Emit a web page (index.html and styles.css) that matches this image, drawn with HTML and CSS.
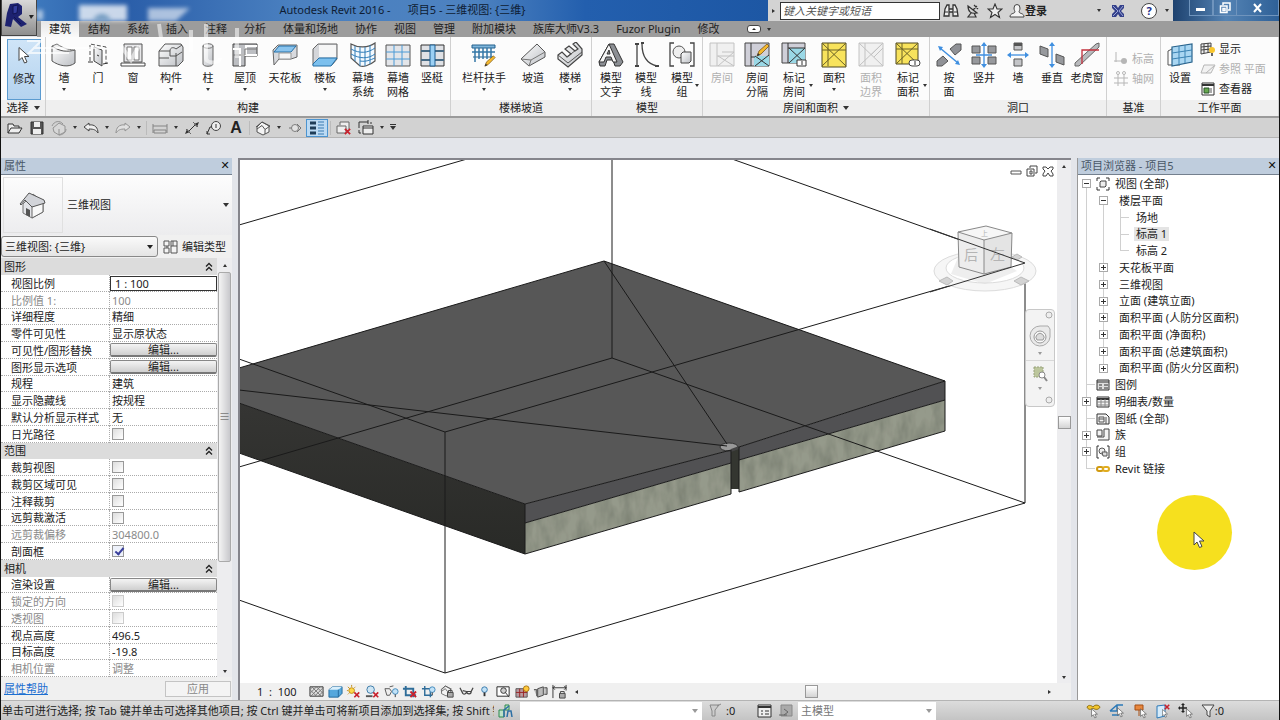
FILE: index.html
```html
<!DOCTYPE html>
<html lang="zh-CN">
<head>
  <meta charset="UTF-8">
  <meta name="viewport" content="width=device-width, initial-scale=1.0">
  <title>Autodesk Revit 2016 - 项目5</title>
  <link rel="stylesheet" href="styles.css">
</head>
<body>

  <svg class="defs" aria-hidden="true">
    <defs>
      <linearGradient id="metal" x1="0" y1="0" x2="1" y2="1"><stop offset="0" stop-color="#fff"/><stop offset="1" stop-color="#bcbfc4"/></linearGradient>
      <symbol id="pointer" viewBox="0 0 12 18"><path d="M1 1v13l3-3 2.500 5.500 2.500-1-2.500-5.500h4.500z" fill="#fff" stroke="#444" stroke-width="1"/></symbol>
      <symbol id="pencil" viewBox="0 0 14 14"><path d="M1 13l2-5 8-7 2 2-8 8z" fill="#f5b92e" stroke="#7a5618" stroke-width=".8"/><path d="M1 13l1-3 2 2z" fill="#333"/></symbol>
      <symbol id="redx" viewBox="0 0 8 8"><path d="M1 1l6 6M7 1l-6 6" stroke="#c8202c" stroke-width="2"/></symbol>
      <symbol id="house" viewBox="0 0 16 16"><path d="M2 7l5-5 7 4v6l-6 3-6-3z" fill="#f4f4f4" stroke="#555"/><path d="M1 7l6-5 8 4-5 3.500L7 5.500 2 9M10 9.500V14" fill="none" stroke="#555"/></symbol>
      <symbol id="chevrons" viewBox="0 0 8 8"><path d="M1 4l3-3 3 3M1 8l3-3 3 3" fill="none" stroke="#222" stroke-width="1.300"/></symbol>
    </defs>
  </svg>

  <header class="top">
    <button class="app-button" aria-label="应用程序菜单">
      <svg width="30" height="30" viewBox="0 0 30 30"><path d="M6 1l8-1 4 3v8l-4 3 9 7-6 3-8-8-2 8-6-1 2-13z" fill="#1d2270"/><path d="M9 3l5-1-1 8-4 1zM10 14l7 7" fill="#333d9c" stroke="#121552"/><path d="M25 12h5l-3 4z" fill="#222"/></svg>
    </button>
    <div class="top-rows">
      <div class="titlebar">
        <div class="title">Autodesk Revit 2016 -&nbsp; &nbsp; &nbsp; 项目5 - 三维视图: {三维}</div>
        <div class="infocenter">
          <span class="tri-right"></span>
          <input class="search" type="text" aria-label="搜索" placeholder="键入关键字或短语">
          <button aria-label="查找"><svg width="16" height="16" viewBox="0 0 16 16"><path d="M1 13l1-7 2-4h2v11zM15 13l-1-7-2-4h-2v11zM6 6h4v3H6z" fill="#eee" stroke="#333" stroke-width="1.300"/><path d="M2 9h3M11 9h3" stroke="#333"/></svg></button>
          <button aria-label="通讯中心"><svg width="16" height="16" viewBox="0 0 16 16"><path d="M3 3c0 6 3 8 9 7zM8 7l4-4M6 10l-3 4h8l-2-4M9 2l4 4" fill="none" stroke="#333" stroke-width="1.200"/></svg></button>
          <button aria-label="收藏夹"><svg width="16" height="16" viewBox="0 0 16 16"><path d="M8 1l2 5h5l-4 3.500 1.500 5L8 11.500l-4.500 3 1.500-5L1 6h5z" fill="#eee" stroke="#333" stroke-width="1.100"/></svg></button>
          <button class="signin"><svg width="16" height="16" viewBox="0 0 16 16"><path d="M5 5a3 3.500 0 0 1 6 0c0 2-1 3-1 4 1 2 5 1 5 5H1c0-4 4-3 5-5 0-1-1-2-1-4z" fill="#f4f4f4" stroke="#444"/></svg><b>登录</b></button>
          <span class="tri signin-tri"></span>
          <button aria-label="Exchange Apps"><svg width="16" height="16" viewBox="0 0 16 16"><path d="M2 2h4l2 3 2-3h4v3l-3 3 3 3v3h-4l-2-3-2 3H2v-3l3-3-3-3z" fill="#34408a"/><path d="M3 3l5 5-5 5M13 3L9 8l4 5" stroke="#9aa6d8" fill="none"/></svg></button>
          <button class="help" aria-label="帮助">?</button>
          <span class="tri"></span>
        </div>
        <div class="window-buttons">
          <button aria-label="最小化"><svg width="12" height="12"><path d="M1 6h9v3H1z" fill="#fff"/></svg></button>
          <button aria-label="还原"><svg width="12" height="12"><path d="M4 3V1h7v7H9M1.500 4h6.500v6.500H1.500zM4 6.500h2v2H4z" fill="none" stroke="#fff" stroke-width="1.500"/></svg></button>
          <button aria-label="关闭" class="win-close"><svg width="12" height="12"><path d="M2 2l7 8M9 2l-7 8" stroke="#fff" stroke-width="2"/></svg></button>
        </div>
      </div>
      <nav class="tabs">
        <button class="tab active">建筑</button>
        <button class="tab">结构</button>
        <button class="tab">系统</button>
        <button class="tab">插入</button>
        <button class="tab">注释</button>
        <button class="tab">分析</button>
        <button class="tab">体量和场地</button>
        <button class="tab">协作</button>
        <button class="tab">视图</button>
        <button class="tab">管理</button>
        <button class="tab">附加模块</button>
        <button class="tab">族库大师V3.3</button>
        <button class="tab">Fuzor Plugin</button>
        <button class="tab">修改</button>
        <button class="ribbon-toggle" aria-label="最小化功能区"><span></span></button>
        <span class="tri"></span>
      </nav>
    </div>
    <svg class="watermark" width="250" height="70" viewBox="0 0 250 70" aria-hidden="true">
      <g class="blur" fill="#fff"><path d="M78 5h48v16H78z" opacity=".75"/><path d="M147 8h42l-14 13h-28z" opacity=".6"/><path d="M36 10h6v10h-6z" opacity=".6"/></g>
      <path d="M92 20c4-8 14-8 18 0z" fill="#4a7fae" opacity=".7" class="blur"/>
      <g fill="none" stroke="#fff" stroke-width="4" opacity=".55"><path d="M158 24l2 14M190 30v22M205 24v34c0 6 14 6 14 0M236 28v30M120 46l10 14 8-14"/></g>
      <g fill="none" stroke="#fff" stroke-width="2" opacity=".7"><path d="M26 41h14l-12 12h40M32 48h68"/></g>
    </svg>
  </header>

  <section class="ribbon">
    <div class="panel select-panel">
      <div class="tools">
        <button class="tool w34 current"><svg width="26" height="26" viewBox="0 0 26 26"><use href="#pointer" x="7" y="3" width="12" height="19"/></svg>修改</button>
      </div>
      <div class="panel-title">选择 <span class="tri big-tri"></span></div>
    </div>

    <div class="panel">
      <div class="tools">
        <button class="tool w34"><svg width="26" height="26" viewBox="0 0 26 26"><path d="M1 4c8 6 16 6 23 4v13c-6 5-16 3-23-2z" fill="url(#metal)" stroke="#555"/><path d="M1 4l5-2c7 5 14 6 18 6" fill="#eee" stroke="#777"/></svg>墙<span class="tri"></span></button>
        <button class="tool w34"><svg width="26" height="26" viewBox="0 0 26 26"><path d="M5 19V2l16 3v17" fill="none" stroke="#555" stroke-dasharray="4 2"/><path d="M9 5l8 3v16l-8-5z" fill="url(#metal)" stroke="#444"/><path d="M12 13l2 1M3 20h5M18 22l5-1" stroke="#333"/></svg>门</button>
        <button class="tool w36"><svg width="26" height="26" viewBox="0 0 26 26"><path d="M4 2h18v18H4z" fill="#e8e8ea" stroke="#555"/><path d="M7 5h5v13H7zM14 5h5v13h-5z" fill="#fff" stroke="#777"/><path d="M1 21h24v3H1z" fill="#fff" stroke="#444"/></svg>窗</button>
        <button class="tool w40"><svg width="26" height="26" viewBox="0 0 26 26"><path d="M1 9l6-7h16l2 3v14l-5 5H1z" fill="url(#metal)" stroke="#555"/><path d="M1 9h11c0-4 4-4 6-2l6-4M18 11v13M12 9v5h6l6-4M1 16h10" fill="none" stroke="#555"/></svg>构件<span class="tri"></span></button>
        <button class="tool w34"><svg width="26" height="26" viewBox="0 0 26 26"><path d="M8 4c0-3 10-3 10 0v18c0 3-10 3-10 0z" fill="url(#metal)" stroke="#666"/><path d="M8 4c0 3 10 3 10 0" fill="none" stroke="#777"/></svg>柱<span class="tri"></span></button>
        <button class="tool w40"><svg width="26" height="26" viewBox="0 0 26 26"><path d="M1 2h24v12H13v10H1z" fill="#bcbec2" stroke="#444"/><path d="M1 7h7v6h17M8 13v11M25 4h-11v10" fill="none" stroke="#fff" stroke-width="2"/><path d="M1 13h12v-6h12" fill="none" stroke="#777"/></svg>屋顶<span class="tri"></span></button>
        <button class="tool w40"><svg width="26" height="26" viewBox="0 0 26 26"><path d="M1 8l5-5h19v12l-6 2H7l-5 6z" fill="#d8dade" stroke="#666"/><path d="M2 10l5-6h17l-5 6z" fill="#8ac4ee" stroke="#2470a8"/><path d="M7 11h12v6H7z" fill="#f6f6f6" stroke="#999"/></svg>天花板</button>
        <button class="tool w40"><svg width="26" height="26" viewBox="0 0 26 26"><path d="M1 7l5-5h19v15l-5 6H1z" fill="#d4d6da" stroke="#666"/><path d="M7 3h17v12H7z" fill="#f6f6f6"/><path d="M1 22l6-6h18l-6 8H1z" fill="#7cc0ee" stroke="#2470a8"/></svg>楼板<span class="tri"></span></button>
        <button class="tool w36"><svg width="26" height="26" viewBox="0 0 26 26"><path d="M1 2c7 4 17 4 24-1v18c-6 5-12 6-15 5L1 16z" fill="#f4faff" stroke="#555" stroke-width="1.200"/><path d="M5 4v15M10 5v19M15 5v19M20 3v19M1 7c9 5 17 4 24-1M1 12c9 5 17 5 24 0M10 19c6 1 10-1 15-3" fill="none" stroke="#2f7cb8"/></svg>幕墙<br>系统</button>
        <button class="tool w34"><svg width="26" height="26" viewBox="0 0 26 26"><path d="M1 3h24v21H1z" fill="#e3e5e9" stroke="#555"/><path d="M1 10h24M1 17h24M9 3v21M17 3v21" stroke="#4a9ad6"/></svg>幕墙<br>网格</button>
        <button class="tool w34"><svg width="26" height="26" viewBox="0 0 26 26"><path d="M2 3h23v21H2z" fill="#dfe1e5" stroke="#333"/><path d="M2 9h23M2 18h23" stroke="#222" stroke-width="2"/><path d="M2 9h9M16 9h9M2 18h9M16 18h9" stroke="#6cb4e8"/><path d="M11 3h5v21h-5z" fill="#9bd0f4" stroke="#1d5f92"/></svg>竖梃</button>
      </div>
      <div class="panel-title">构建</div>
    </div>

    <div class="panel">
      <div class="tools">
        <button class="tool w64"><svg width="26" height="26" viewBox="0 0 26 26"><path d="M1 3h23v3H1zM2 15h21" fill="#7fb6dc" stroke="#24608c"/><path d="M4 6v14M8 6v11M12 6v11M16 6v11M20 6v10M1 10h23" stroke="#3577a6" stroke-width="1.500"/><use href="#pencil" x="13" y="13" width="12" height="12"/></svg>栏杆扶手<span class="tri"></span></button>
        <button class="tool w34"><svg width="26" height="26" viewBox="0 0 26 26"><path d="M1 17L17 2l8 8v5L9 24z" fill="url(#metal)" stroke="#555"/><path d="M9 24l2-6 14-8M1 17l10 1" fill="none" stroke="#777"/></svg>坡道</button>
        <button class="tool w40"><svg width="26" height="26" viewBox="0 0 26 26"><path d="M1 13l4-3 5 5 4-3-6-5 4-3 6 5 3-2-5-5 3-2 6 7v6L11 25 1 17z" fill="url(#metal)" stroke="#444" stroke-width="1.200"/><path d="M1 13l10 8 14-11M10 15l9-7" fill="none" stroke="#555"/></svg>楼梯<span class="tri"></span></button>
      </div>
      <div class="panel-title">楼梯坡道</div>
    </div>

    <div class="panel model-panel">
      <div class="tools">
        <button class="tool w34"><svg width="26" height="26" viewBox="0 0 26 26"><path d="M1 20L11 2h5l9 18-3 4h-5l-2-6H9l-2 6H2z" fill="#8c8f94" stroke="#333"/><path d="M1 20L11 2l8 18h-4l-2-5H8l-2 5zM9 12h3l-1-4z" fill="#f6f6f6" stroke="#333"/></svg>模型<br>文字</button>
        <button class="tool w36"><svg width="26" height="26" viewBox="0 0 26 26"><path d="M4 2v22M9 2c0 14 6 20 15 22" fill="none" stroke="#444" stroke-width="1.300"/><path d="M2 2h4M2 24h4M8 1h3M22 24h4" stroke="#444" stroke-width="2"/></svg>模型<br>线</button>
        <button class="tool w36"><svg width="26" height="26" viewBox="0 0 26 26"><path d="M5 1H1v23h4M21 1h4v23h-4" fill="none" stroke="#444" stroke-width="1.300"/><circle cx="10" cy="10" r="6" fill="#eee" stroke="#555"/><path d="M12 12l2-2h8v9l-2 2h-8z" fill="url(#metal)" stroke="#444"/></svg>模型<br>组<span class="tri side"></span></button>
      </div>
      <div class="panel-title">模型</div>
    </div>

    <div class="panel">
      <div class="tools">
        <button class="tool w36" disabled><svg width="26" height="26" viewBox="0 0 26 26"><path d="M1 1h24v23H1z" fill="#ececec" stroke="#aaa"/><path d="M8 1v13h5M8 14v10M25 10H13M13 14h12M9 14l16 10M25 10L9 24" fill="none" stroke="#aaa"/></svg>房间</button>
        <button class="tool w34"><svg width="26" height="26" viewBox="0 0 26 26"><path d="M1 1h24v23H1z" fill="#cfcfd8" stroke="#444"/><path d="M10 14h15v10H10z" fill="#9ad8e6"/><path d="M7 1v14h4M7 15v9M11 14l14 10M25 13L11 24" fill="none" stroke="#333"/><use href="#pencil" x="12" y="1" width="14" height="14"/></svg>房间<br>分隔</button>
        <button class="tool w40"><svg width="26" height="26" viewBox="0 0 26 26"><path d="M1 1h23v20H1z" fill="#cfcfd8" stroke="#444"/><path d="M8 6h16v15H8z" fill="#9ad8e6"/><path d="M7 1v20M7 6h17M8 6l16 15M24 6L8 21" fill="none" stroke="#333"/><path d="M16 18h9v6h-9z" fill="#fff" stroke="#333"/><path d="M21 19v4" stroke="#333"/></svg>标记<br>房间<span class="tri side"></span></button>
        <button class="tool w40"><svg width="26" height="26" viewBox="0 0 26 26"><path d="M1 1h24v24H1z" fill="#f8e35c" stroke="#4d4620"/><path d="M1 8h24M7 1v23M1 1l24 23M25 1L1 24" stroke="#6b6227"/></svg>面积<span class="tri"></span></button>
        <button class="tool w34" disabled><svg width="26" height="26" viewBox="0 0 26 26"><path d="M1 1h24v23H1z" fill="#ececec" stroke="#aaa"/><path d="M1 1l24 23M25 1L1 24M7 1v23M13 13L24 2M16 15l9-9" stroke="#aaa"/></svg>面积<br>边界</button>
        <button class="tool w40"><svg width="26" height="26" viewBox="0 0 26 26"><path d="M1 1h22v21H1z" fill="#f8e35c" stroke="#4d4620"/><path d="M1 7h22M7 1v21M1 1l22 21M23 1L1 22" stroke="#6b6227"/><rect x="14" y="18" width="11" height="6" rx="3" fill="#fff" stroke="#444"/><path d="M20 19v4" stroke="#333"/></svg>标记<br>面积<span class="tri side"></span></button>
      </div>
      <div class="panel-title">房间和面积 <span class="tri big-tri"></span></div>
    </div>

    <div class="panel">
      <div class="tools">
        <button class="tool w36"><svg width="26" height="26" viewBox="0 0 26 26"><path d="M14 7l6-5h5v6l-6 5zM1 19l6-5 5 5-6 5H1z" fill="#8f9196" stroke="#555"/><path d="M4 6l18 15" stroke="#3f8fe0" stroke-width="1.500"/><path d="M2 4l5 1-3 4zM24 23l-5-1 3-4z" fill="#3f8fe0"/></svg>按<br>面</button>
        <button class="tool w34"><svg width="26" height="26" viewBox="0 0 26 26"><path d="M1 4h8v7H1zM17 4h8v7h-8zM1 15h8v7H1zM17 15h8v7h-8z" fill="#97999d" stroke="#555"/><path d="M13 2v22M5 13h16" stroke="#3f8fe0" stroke-width="1.300"/><path d="M13 0l3 4h-6zM13 26l3-4h-6z" fill="#3f8fe0"/></svg>竖井</button>
        <button class="tool w34"><svg width="26" height="26" viewBox="0 0 26 26"><path d="M9 1h8v7H9zM9 17h8v7H9z" fill="#c4c5c8" stroke="#555"/><path d="M9 1h8v3H9z" fill="#555"/><path d="M4 13h18" stroke="#3f8fe0" stroke-width="1.300"/><path d="M2 13l4-3v6zM24 13l-4-3v6z" fill="#3f8fe0"/></svg>墙</button>
        <button class="tool w34"><svg width="26" height="26" viewBox="0 0 26 26"><path d="M1 4l8 3v8l-8-3zM17 12l8 3v8l-8-3z" fill="#97999d" stroke="#555"/><path d="M13 3v21" stroke="#3f8fe0" stroke-width="1.300"/><path d="M13 0l3 4h-6zM13 26l3-4h-6z" fill="#3f8fe0"/></svg>垂直</button>
        <button class="tool w36"><svg width="26" height="26" viewBox="0 0 26 26"><path d="M1 21L22 2l3-1v4L5 24H1z" fill="#b9babd" stroke="#666"/><path d="M8 22V8h17" fill="none" stroke="#c2303c" stroke-width="1.300"/></svg>老虎窗</button>
      </div>
      <div class="panel-title">洞口</div>
    </div>

    <div class="panel datum-panel">
      <div class="tools column">
        <button class="small-tool" disabled><svg width="16" height="16" viewBox="0 0 16 16"><path d="M3 1v10M1 10h9" stroke="#999"/><circle cx="11" cy="10" r="3" fill="#999"/></svg>标高</button>
        <button class="small-tool" disabled><svg width="16" height="16" viewBox="0 0 16 16"><path d="M5 3v12M11 3v12M1 7h14M1 12h14" stroke="#999"/><circle cx="5" cy="2" r="1.500" fill="none" stroke="#999"/><circle cx="11" cy="2" r="1.500" fill="none" stroke="#999"/></svg>轴网</button>
      </div>
      <div class="panel-title">基准</div>
    </div>

    <div class="panel last-panel">
      <div class="tools">
        <button class="tool w36"><svg width="26" height="26" viewBox="0 0 26 26"><path d="M1 9v14h12M1 9l4-2" fill="none" stroke="#555"/><path d="M5 5l20-3v18L5 24z" fill="#a9d6f2" stroke="#29638c" stroke-width="1.200"/><path d="M12 4v19M18 3v18M5 11l20-3M5 17l20-3" stroke="#3b83b4"/></svg>设置</button>
        <div class="column work-column">
          <button class="small-tool"><svg width="16" height="16" viewBox="0 0 16 16"><path d="M1 3l10-1v9L1 13zM4 3v9M8 2v10M1 6l10-1M1 9l10-1" fill="#eee" stroke="#444"/><circle cx="12" cy="9" r="3" fill="#f9c62c"/><path d="M12 12v3" stroke="#666" stroke-width="2"/></svg>显示</button>
          <button class="small-tool" disabled><svg width="16" height="16" viewBox="0 0 16 16"><path d="M4 4h11l-4 8H1zM6 12l8-7" fill="#eee" stroke="#999"/></svg>参照 平面</button>
          <button class="small-tool"><svg width="16" height="16" viewBox="0 0 16 16"><path d="M2 2h12v12H2z" fill="#fff" stroke="#333"/><path d="M2 4h12" stroke="#333" stroke-width="2"/><path d="M4 7h5v5H4z" fill="#66a84e" stroke="#28502b"/><path d="M11 7v5" stroke="#555"/></svg>查看器</button>
        </div>
      </div>
      <div class="panel-title">工作平面</div>
    </div>
  </section>

  <div class="qat">
    <button aria-label="打开"><svg width="16" height="16" viewBox="0 0 16 16"><path d="M1 13V4h5l1 2h5v2M1 13l3-5h11l-3 5z" fill="#eee" stroke="#333"/></svg></button>
    <button aria-label="保存"><svg width="16" height="16" viewBox="0 0 16 16"><path d="M2 2h12v12H2z" fill="#555" stroke="#333"/><path d="M5 2h6v5H5zM4 9h8v5H4z" fill="#eee"/></svg></button>
    <button aria-label="同步"><svg width="16" height="16" viewBox="0 0 16 16" opacity=".5"><path d="M2 8l6-5 6 3v6l-6 3-5-3z" fill="#ddd" stroke="#555"/><path d="M1 6c2-5 8-6 11-2M15 9c0 4-4 6-7 6M8 9v6" fill="none" stroke="#555"/></svg></button>
    <span class="tri"></span>
    <button aria-label="放弃"><svg width="16" height="16" viewBox="0 0 16 16"><path d="M1 7l5-4v2c6-1 9 3 9 8-2-3-4-4-9-4v2z" fill="#eee" stroke="#444"/></svg></button>
    <span class="tri"></span>
    <button aria-label="重做"><svg width="16" height="16" viewBox="0 0 16 16" opacity=".5"><path d="M15 7l-5-4v2C4 4 1 8 1 13c2-3 4-4 9-4v2z" fill="#eee" stroke="#555"/></svg></button>
    <span class="tri"></span>
    <i class="sep"></i>
    <button aria-label="测量"><svg width="16" height="16" viewBox="0 0 16 16" opacity=".55"><path d="M1 4v9M15 4v9M1 6h14M2 10h12v3H2z" fill="none" stroke="#444"/></svg></button>
    <span class="tri"></span>
    <button aria-label="对齐尺寸标注"><svg width="16" height="16" viewBox="0 0 16 16"><path d="M4 12l8-8" stroke="#333"/><path d="M1 14l2-5 3 3zM15 2l-5 2 3 3z" fill="#333"/><path d="M2 9l5 5M9 2l5 5" stroke="#666"/></svg></button>
    <button aria-label="按类别标记"><svg width="16" height="16" viewBox="0 0 16 16"><circle cx="10" cy="6" r="4.500" fill="#eee" stroke="#444"/><path d="M10 4v4M6 7H4l-3 7M1 11v3h3" fill="none" stroke="#333"/></svg></button>
    <button class="letter" aria-label="文字">A</button>
    <i class="sep"></i>
    <button aria-label="默认三维视图"><svg width="16" height="16"><use href="#house"/></svg></button>
    <span class="tri"></span>
    <button aria-label="剖面"><svg width="16" height="16" viewBox="0 0 16 16" opacity=".6"><path d="M2 8h4M10 4l4 4-4 4" fill="none" stroke="#333"/><circle cx="8" cy="8" r="3.500" fill="#eee" stroke="#444"/></svg></button>
    <button class="on" aria-label="细线"><svg width="16" height="16" viewBox="0 0 16 16"><path d="M1 3h6M1 8h6M1 13h6" stroke="#1f3d58" stroke-width="3"/><path d="M9 2h6M9 5h6M9 8h6M9 11h6M9 14h6" stroke="#3a7ab0"/></svg></button>
    <i class="sep"></i>
    <button aria-label="关闭隐藏窗口"><svg width="16" height="16" viewBox="0 0 16 16"><path d="M4 5V2h9v7M1 6h9v7H1z" fill="#eee" stroke="#666"/><use href="#redx" x="8" y="8" width="7" height="7"/></svg></button>
    <button aria-label="切换窗口"><svg width="16" height="16" viewBox="0 0 16 16"><path d="M5 6h10v8H5zM5 8h10" fill="#eee" stroke="#333"/><path d="M1 8V2h9M10 0v4M13 4V2M1 10v3h2" fill="none" stroke="#333"/></svg></button>
    <span class="tri"></span>
    <button class="customize" aria-label="自定义快速访问工具栏"><span class="tri big-tri"></span></button>
  </div>

  <main class="workspace">
    <aside class="palette">
      <div class="palette-head"><span>属性</span><button aria-label="关闭属性">✕</button></div>
      <button class="type-selector">
        <span class="type-thumb"><svg width="32" height="32" viewBox="0 0 32 32"><path d="M6 15v9l9 5 11-6V13L16 5z" fill="#e3e4e8" stroke="#777"/><path d="M15 17v12l11-6V13z" fill="#f8f8f8" stroke="#666"/><path d="M3 15L12 4l15 7 1 3-13 4-7-7-4 5z" fill="#d2d4d9" stroke="#555"/><path d="M9 19l4 2v7l-4-2z" fill="#555"/></svg></span>
        <span class="type-name">三维视图</span>
        <span class="tri big-tri"></span>
      </button>
      <div class="instance-row">
        <span class="select-wrap instance-select"><select aria-label="实例"><option>三维视图: {三维}</option></select></span>
        <button class="edit-type"><svg width="16" height="16" viewBox="0 0 16 16"><path d="M1 2h5v5H1zM1 9h5v5H1zM8 2h6v12H8zM8 7h6M4 7v2M10 2v5" fill="#f4f4f4" stroke="#555"/></svg>编辑类型</button>
      </div>
      <div class="props-body">
        <table class="props">
          <tbody>
            <tr class="group"><th colspan="2">图形<svg class="fold" width="8" height="9"><use href="#chevrons"/></svg></th></tr>
            <tr><th><label for="scale">视图比例</label></th><td><input class="boxed" id="scale" type="text" value="1 : 100"></td></tr>
            <tr class="off"><th>比例值 1:</th><td>100</td></tr>
            <tr><th>详细程度</th><td>精细</td></tr>
            <tr><th>零件可见性</th><td>显示原状态</td></tr>
            <tr><th>可见性/图形替换</th><td><button class="edit">编辑...</button></td></tr>
            <tr><th>图形显示选项</th><td><button class="edit">编辑...</button></td></tr>
            <tr><th>规程</th><td>建筑</td></tr>
            <tr><th>显示隐藏线</th><td>按规程</td></tr>
            <tr><th>默认分析显示样式</th><td>无</td></tr>
            <tr><th><label for="sun">日光路径</label></th><td><input id="sun" type="checkbox"></td></tr>
            <tr class="group"><th colspan="2">范围<svg class="fold" width="8" height="9"><use href="#chevrons"/></svg></th></tr>
            <tr><th><label for="crop">裁剪视图</label></th><td><input id="crop" type="checkbox"></td></tr>
            <tr><th><label for="crop-visible">裁剪区域可见</label></th><td><input id="crop-visible" type="checkbox"></td></tr>
            <tr><th><label for="anno">注释裁剪</label></th><td><input id="anno" type="checkbox"></td></tr>
            <tr><th><label for="far">远剪裁激活</label></th><td><input id="far" type="checkbox"></td></tr>
            <tr class="off"><th>远剪裁偏移</th><td>304800.0</td></tr>
            <tr><th><label for="section">剖面框</label></th><td><input id="section" type="checkbox" checked></td></tr>
            <tr class="group"><th colspan="2">相机<svg class="fold" width="8" height="9"><use href="#chevrons"/></svg></th></tr>
            <tr><th>渲染设置</th><td><button class="edit">编辑...</button></td></tr>
            <tr class="off"><th><label for="locked">锁定的方向</label></th><td><input id="locked" type="checkbox" disabled></td></tr>
            <tr class="off"><th><label for="persp">透视图</label></th><td><input id="persp" type="checkbox" disabled></td></tr>
            <tr><th><label for="eye">视点高度</label></th><td><input id="eye" type="text" value="496.5"></td></tr>
            <tr><th><label for="target">目标高度</label></th><td><input id="target" type="text" value="-19.8"></td></tr>
            <tr class="off"><th>相机位置</th><td>调整</td></tr>
          </tbody>
        </table>
        <div class="scroll props-scroll"><span class="tri-up"></span><div class="thumb">≡</div><span class="tri"></span></div>
      </div>
      <div class="palette-foot"><a href="#">属性帮助</a><button disabled>应用</button></div>
    </aside>

    <section class="view">
      <div class="view-main">
        <div class="canvas">
          <svg class="scene" viewBox="240 160 817 523" preserveAspectRatio="xMinYMin slice" role="img" aria-label="三维视图">
            <defs>
              <linearGradient id="side" x1="0" y1="0" x2="0" y2="1"><stop offset="0" stop-color="#353533"/><stop offset="1" stop-color="#292a27"/></linearGradient>
              <filter id="grain" x="0" y="0" width="1" height="1">
                <feTurbulence type="fractalNoise" baseFrequency=".09 .04" numOctaves="3" seed="4"/>
                <feColorMatrix values="0 0 0 0 .15  0 0 0 0 .17  0 0 0 0 .13  1.200 0 0 0 -.4"/>
                <feComposite in2="SourceGraphic" operator="in"/>
                <feMerge><feMergeNode in="SourceGraphic"/><feMergeNode/></feMerge>
                <feComposite in2="SourceGraphic" operator="in"/>
              </filter>
            </defs>
            <path d="M239 368L604 261 945 381 739 447 731 450 525 504 239 403z" fill="#575757"/>
            <path d="M239 403L525 504V554L239 453z" fill="url(#side)"/>
            <path d="M525 504L731 450V463L525 523zM739 447L945 381V400L739 460z" fill="#515153"/>
            <path d="M525 523L731 463V494L525 554zM739 460L945 400V431L739 492z" fill="#959a8b" filter="url(#grain)"/>
            <path d="M731 446h8v43h-8z" fill="#343630"/>
            <ellipse cx="729" cy="447" rx="9" ry="4" fill="#999" stroke="#333"/>
            <path d="M731 449l8-3v3l-8 3z" fill="#444"/>
            <g class="edges">
              <path d="M239 368L604 261 945 381V431L739 492V447L945 381M239 403L525 504V554L239 453M525 504L731 450V494L525 554M525 523L731 463M739 460L945 400"/>
              <path d="M604 261L727 444M239 390L727 446"/>
            </g>
            <g class="wire">
              <path d="M239 225L467 159M612 159V358L239 467M732 159L1025 263V503L612 358M1025 264L445 432L239 359M445 432V673L239 600M445 673L1025 503"/>
            </g>
            <g class="cube">
              <ellipse cx="985" cy="271" rx="51" ry="20" fill="#f6f6f6" stroke="#dcdcdc"/>
              <ellipse cx="985" cy="268" rx="39" ry="15" fill="#fff" stroke="#dcdcdc"/>
              <path d="M959 255l26 19 26-7 6 4-32 13-34-10z" fill="#ddd" opacity=".5"/>
              <path d="M958 232L986 226 1012 233 984 240z" fill="#f6f6f6"/>
              <path d="M958 232L984 240V274L959 267z" fill="#ededed"/>
              <path d="M984 240L1012 233 1011 267 984 274z" fill="#e4e4e4"/>
              <path d="M958 232L986 226 1012 233 984 240zM958 232l1 35 25 7 27-7 1-34M984 240v34" fill="none" stroke="#888"/>
              <text x="964" y="260" font-size="14">后</text>
              <text x="990" y="260" font-size="15">左</text>
              <text x="981" y="236" font-size="7">上</text>
              <path d="M939 281l8-4 6 4-6 4zM1014 281l7-4 8 4-8 4zM1012 257l5-3 5 3-5 3z" fill="#d4d4d4" stroke="#bbb"/>
            </g>
            <path d="M930 229L1025 263 930 292" fill="none" stroke="#333"/>
          </svg>
          <div class="mdi-buttons">
            <button aria-label="最小化视图"><svg width="12" height="12"><path d="M1 6h10v3H1z" fill="#fff" stroke="#555"/></svg></button>
            <button aria-label="还原视图"><svg width="12" height="12"><path d="M4 3V1h7v7H9M1 4h7v7H1zM4 6h2v3H4z" fill="#fff" stroke="#444"/></svg></button>
            <button aria-label="关闭视图"><svg width="12" height="12"><path d="M1 2h3l2 2 2-2h3v2L9 6l2 3v2H8L6 8l-2 3H1V9l2-3-2-2z" fill="#fff" stroke="#444"/></svg></button>
          </div>
          <div class="navbar">
            <svg width="10" height="10"><circle cx="5" cy="5" r="3" fill="#eee" stroke="#aaa"/></svg>
            <button aria-label="控制盘"><svg width="22" height="22" viewBox="0 0 22 22"><path d="M11 1h8l2 3v8a10 10 0 1 1-10-11z" fill="#eaeaea" stroke="#aaa"/><circle cx="11" cy="12" r="6" fill="#fafafa" stroke="#999"/><path d="M8 15a4 4 0 1 1 6 0z" fill="#ddd" stroke="#999"/></svg></button>
            <span class="tri pale"></span>
            <hr>
            <button aria-label="区域放大"><svg width="16" height="16" viewBox="0 0 16 16"><path d="M2 1h9v10H2z" fill="#bcc69c" stroke="#98a27c" stroke-dasharray="2 1"/><circle cx="10" cy="9" r="3" fill="#fff" stroke="#888"/><path d="M12 11l3 4" stroke="#888" stroke-width="2"/></svg></button>
            <span class="tri pale"></span>
            <svg width="10" height="10"><circle cx="5" cy="5" r="3" fill="#eee" stroke="#aaa"/></svg>
          </div>
        </div>
        <div class="scroll view-scroll"><span class="tri-up"></span><div class="square"></div><span class="tri"></span></div>
      </div>
      <div class="view-bar">
        <button class="scale">1 &nbsp;:&nbsp; 100</button>
        <div class="view-icons">
          <button aria-label="详细程度"><svg viewBox="0 0 16 16"><path d="M1 3h14v10H1z" fill="#ddd" stroke="#333"/><path d="M1 6l3-3M1 10l7-7M2 13L12 3M6 13l9-9M10 13l5-5M3 3l10 10M8 3l7 7M1 6l7 7" stroke="#777"/></svg></button>
          <button aria-label="视觉样式"><svg viewBox="0 0 16 16"><path d="M1 6l4-3h10v7l-4 4H1z" fill="#55a7dc" stroke="#246a9c"/><path d="M1 6h10l4-3H5z" fill="#d9effc"/><path d="M11 6v8" stroke="#246a9c"/></svg></button>
          <button aria-label="日光路径"><svg viewBox="0 0 16 16"><circle cx="6" cy="7" r="3" fill="#ffd84a" stroke="#c08a10"/><path d="M6 1v2M1 7h1M2 3l2 2M10 3L9 4M2 11l1-1" stroke="#c08a10"/><use href="#redx" x="8" y="8" width="7" height="7"/></svg></button>
          <button aria-label="阴影"><svg viewBox="0 0 16 16"><circle cx="6" cy="6" r="4" fill="#cfe6f4" stroke="#3a79a6"/><path d="M1 13h7" stroke="#555" stroke-width="2"/><use href="#redx" x="8" y="8" width="7" height="7"/></svg></button>
          <button aria-label="渲染"><svg viewBox="0 0 16 16"><path d="M1 5h5l2 3-2 4H3z" fill="#eee" stroke="#555"/><path d="M6 3l4-1" stroke="#555"/><circle cx="12" cy="8" r="3" fill="#c2e2f7" stroke="#3f88bb"/><path d="M12 11v3" stroke="#333"/></svg></button>
          <button aria-label="裁剪视图"><svg viewBox="0 0 16 16"><path d="M4 2v10h11M1 5h11v9" fill="none" stroke="#2f6d99" stroke-width="2"/><use href="#redx" x="8" y="7" width="8" height="8"/></svg></button>
          <button aria-label="显示裁剪区域"><svg viewBox="0 0 16 16"><path d="M4 2v10h8M1 5h9v9" fill="none" stroke="#2f6d99" stroke-width="1.500"/><circle cx="12" cy="6" r="3" fill="#c2e2f7" stroke="#3f88bb"/><path d="M12 9v3" stroke="#333"/></svg></button>
          <button aria-label="锁定三维视图"><svg viewBox="0 0 16 16"><use href="#house" width="13" height="14"/><path d="M8 9h6v5H8z" fill="#aaa" stroke="#444"/><path d="M9 9V7h4v2" fill="none" stroke="#444"/></svg></button>
          <button aria-label="临时隐藏/隔离"><svg viewBox="0 0 16 16"><path d="M1 4l3 6c2 2 4 0 4-2 1 4 5 3 5 0l2-4M4 7l4 1h5" fill="none" stroke="#444" stroke-width="1.300"/></svg></button>
          <button aria-label="显示隐藏的图元"><svg viewBox="0 0 16 16"><circle cx="8" cy="6" r="3" fill="#c2e2f7" stroke="#3377ab"/><path d="M8 9v4" stroke="#333" stroke-width="2"/></svg></button>
          <button aria-label="临时视图属性"><svg viewBox="0 0 16 16"><path d="M1 3h13v10H1z" fill="#fff" stroke="#222"/><circle cx="8" cy="7" r="3" fill="#ccc" stroke="#333"/><path d="M10 9l4 5" stroke="#333"/></svg></button>
          <button aria-label="分析模型"><svg viewBox="0 0 16 16"><path d="M1 5h12v9H1z" fill="#b99aa0" stroke="#555"/><path d="M1 9h12M5 5v9M9 5v9" stroke="#922"/><circle cx="12" cy="5" r="3" fill="#ffc93c" stroke="#a87410"/></svg></button>
          <button aria-label="位移集"><svg viewBox="0 0 16 16"><path d="M5 5l6-2v9l-6 2zM1 6h3v7M12 4h3v7h-3" fill="#bbb" stroke="#444"/></svg></button>
          <button aria-label="约束"><svg viewBox="0 0 16 16"><path d="M1 1v14M15 1v6M1 4h14M3 2L1 4l2 2M13 2l2 2-2 2" fill="none" stroke="#333"/><path d="M8 10h6v5H8z" fill="#aaa" stroke="#444"/><path d="M9 10V8h4v2" fill="none" stroke="#444"/></svg></button>
        </div>
        <span class="tri-left"></span>
        <div class="hscroll"><div class="square"></div><span class="tri-right"></span></div>
      </div>
    </section>

    <aside class="browser">
      <div class="palette-head"><span>项目浏览器 - 项目5</span><button aria-label="关闭项目浏览器">✕</button></div>
      <ul class="tree">
        <li><i class="cell first"><button class="box minus" aria-label="折叠"></button></i><svg width="14" height="14" viewBox="0 0 14 14"><path d="M4 1H1v3M10 1h3v3M4 13H1v-3M10 13h3v-3" fill="none" stroke="#333"/><path d="M4 5l1-1h5v5l-1 1H4z" fill="#eee" stroke="#444"/></svg><span>视图 (全部)</span></li>
        <li><i class="cell"></i><i class="cell first"><button class="box minus" aria-label="折叠"></button></i><span class="deep">楼层平面</span></li>
        <li><i class="cell"></i><i class="cell"></i><i class="cell dash"></i><span class="deep">场地</span></li>
        <li><i class="cell"></i><i class="cell"></i><i class="cell dash"></i><span class="deep picked">标高 1</span></li>
        <li><i class="cell"></i><i class="cell"></i><i class="cell dash end"></i><span class="deep">标高 2</span></li>
        <li><i class="cell"></i><i class="cell"><button class="box" aria-label="展开"></button></i><span class="deep">天花板平面</span></li>
        <li><i class="cell"></i><i class="cell"><button class="box" aria-label="展开"></button></i><span class="deep">三维视图</span></li>
        <li><i class="cell"></i><i class="cell"><button class="box" aria-label="展开"></button></i><span class="deep">立面 (建筑立面)</span></li>
        <li><i class="cell"></i><i class="cell"><button class="box" aria-label="展开"></button></i><span class="deep">面积平面 (人防分区面积)</span></li>
        <li><i class="cell"></i><i class="cell"><button class="box" aria-label="展开"></button></i><span class="deep">面积平面 (净面积)</span></li>
        <li><i class="cell"></i><i class="cell"><button class="box" aria-label="展开"></button></i><span class="deep">面积平面 (总建筑面积)</span></li>
        <li><i class="cell"></i><i class="cell end"><button class="box" aria-label="展开"></button></i><span class="deep">面积平面 (防火分区面积)</span></li>
        <li><i class="cell dash"></i><svg width="14" height="14" viewBox="0 0 14 14"><path d="M1 2h12v10H1z" fill="#ddd" stroke="#333"/><path d="M1 4h12M3 7h3M8 7h4M3 10h3M8 10h4" stroke="#333"/></svg><span>图例</span></li>
        <li><i class="cell"><button class="box" aria-label="展开"></button></i><svg width="14" height="14" viewBox="0 0 14 14"><path d="M1 2h12v10H1z" fill="#f4f4f4" stroke="#333"/><path d="M1 4h12" stroke="#333" stroke-width="2"/><path d="M1 7h12M1 10h12M5 4v8M9 4v8" stroke="#888"/></svg><span>明细表/数量</span></li>
        <li><i class="cell dash"></i><svg width="14" height="14" viewBox="0 0 14 14"><path d="M1 2h9l3 3v7H1z" fill="#f4f4f4" stroke="#333"/><path d="M3 5h5v5H3zM10 5v7M3 7h5" fill="none" stroke="#555"/></svg><span>图纸 (全部)</span></li>
        <li><i class="cell"><button class="box" aria-label="展开"></button></i><svg width="14" height="14" viewBox="0 0 14 14"><path d="M1 2h5v6H1zM8 1h5v11H2M8 1v8H1" fill="#f4f4f4" stroke="#444"/></svg><span>族</span></li>
        <li><i class="cell"><button class="box" aria-label="展开"></button></i><svg width="14" height="14" viewBox="0 0 14 14"><path d="M3 1H1v12h2M11 1h2v12h-2" fill="none" stroke="#333"/><circle cx="6" cy="6" r="3" fill="#eee" stroke="#555"/><path d="M6 7h5v4H7z" fill="#ddd" stroke="#555"/></svg><span>组</span></li>
        <li><i class="cell dash end"></i><svg width="14" height="14" viewBox="0 0 14 14"><rect x="1" y="5" width="6" height="4" rx="2" fill="none" stroke="#d19a10" stroke-width="2"/><rect x="7" y="5" width="6" height="4" rx="2" fill="none" stroke="#e0ac20" stroke-width="2"/></svg><span>Revit 链接</span></li>
      </ul>
    </aside>
  </main>

  <footer class="status">
    <div class="hint">单击可进行选择; 按 Tab 键并单击可选择其他项目; 按 Ctrl 键并单击可将新项目添加到选择集; 按 Shift 键</div>
    <svg class="status-icon" width="18" height="16" viewBox="0 0 18 16"><path d="M2 7h5v7H2zM8 2h4v5H8z" fill="#bde0c8" stroke="#2c8a4c"/><path d="M7 14V7l5-4M10 14l1-6h3l1 6" fill="none" stroke="#2b6fa5" stroke-width="1.500"/></svg>
    <span class="select-wrap workset"><select aria-label="工作集"><option></option></select></span>
    <button class="count"><svg width="14" height="16" viewBox="0 0 14 16"><path d="M2 2h9L7 7v6H4V8zM9 3l4-2" fill="#ccc" stroke="#888"/></svg>:0</button>
    <button class="design" aria-label="设计选项"><svg width="16" height="16" viewBox="0 0 16 16"><path d="M2 2h13v12H2z" fill="#eee" stroke="#333"/><path d="M2 4h13" stroke="#333" stroke-width="2"/><path d="M5 8h2M9 8h4M5 11h2M9 11h4" stroke="#333"/></svg></button>
    <button class="design" aria-label="添加到集" disabled><svg width="16" height="16" viewBox="0 0 16 16"><path d="M3 2h11v11H3z" fill="#aaa" stroke="#888"/><path d="M1 12h8M6 6l4 3-4 3" fill="none" stroke="#666"/></svg></button>
    <span class="select-wrap option-select"><select aria-label="设计选项集"><option>主模型</option></select></span>
    <div class="pick-tools">
      <button aria-label="选择链接"><svg width="16" height="16" viewBox="0 0 16 16"><path d="M1 4c2-3 5-1 6 0 2-3 6-2 7 0-1 3-5 3-7 1-2 2-5 2-6-1z" fill="#f2c52e" stroke="#8f6f10"/><use href="#pointer" x="5" y="5" width="7" height="11"/></svg></button>
      <button aria-label="选择基线图元"><svg width="16" height="16" viewBox="0 0 16 16"><path d="M1 8l7-6h6M1 8h9M3 12h7M8 2v6" fill="none" stroke="#2b79b8" stroke-width="1.500"/><use href="#pointer" x="8" y="4" width="7" height="11"/></svg></button>
      <button aria-label="选择锁定图元"><svg width="16" height="16" viewBox="0 0 16 16"><path d="M3 2h8v5H3zM7 7v6" fill="#e8873d" stroke="#a54f14"/><use href="#pointer" x="8" y="5" width="7" height="11"/></svg></button>
      <button aria-label="按面选择"><svg width="16" height="16" viewBox="0 0 16 16"><path d="M2 3l8-1v11l-8 2z" fill="#d5ebfa" stroke="#2b79b8"/><use href="#redx" x="9" y="1" width="6" height="6"/><use href="#pointer" x="7" y="6" width="6" height="9"/></svg></button>
      <button aria-label="选择时拖拽"><svg width="16" height="16" viewBox="0 0 16 16"><path d="M5 1v8M1 5h8" stroke="#222" stroke-width="1.500"/><path d="M5 0l2 2H3zM0 5l2-2v4zM5 10l2-2H3z" fill="#222"/><use href="#pointer" x="8" y="5" width="7" height="11"/></svg></button>
      <button class="filter" aria-label="过滤器"><svg width="14" height="16" viewBox="0 0 14 16"><path d="M1 2h12L9 8v6l-3-2V8z" fill="#eee" stroke="#444"/></svg>:0</button>
    </div>
  </footer>

  <div class="click-mark"><svg width="12" height="18"><use href="#pointer"/></svg></div>

</body>
</html>
```

FILE: styles.css
```css
* {
  box-sizing: border-box;
}

body {
  margin: 0;
  height: 100vh;
  display: flex;
  flex-direction: column;
  position: relative;
  overflow: hidden;
  border: solid #111;
  border-width: 0 1px;
  background: #e3e5ea;
  color: #222;
  font: 11px/14px "Noto Sans", "Noto Sans CJK SC", sans-serif;
}

button, input, select {
  font: inherit;
  color: inherit;
  margin: 0;
  padding: 0;
  border: 0;
  border-radius: 0;
  background: none;
}

button {
  white-space: nowrap;
}

svg {
  display: block;
  flex: none;
}

.defs {
  position: absolute;
  width: 0;
  height: 0;
}

/* small arrows */
.tri, .tri-up, .tri-left, .tri-right {
  flex: none;
  width: 0;
  height: 0;
  border: 2px solid transparent;
}

.tri { border-top: 3px solid #333; border-bottom: 0; }
.tri-up { border-bottom: 3px solid #333; border-top: 0; }
.tri-left { border-right: 3px solid #333; border-left: 0; }
.tri-right { border-left: 3px solid #333; border-right: 0; }
.big-tri { border-width: 4px 3px 0; }
.pale { border-top-color: #999; }

/* title bar and tabs */
.top {
  display: flex;
  position: relative;
  flex: none;
}

.app-button {
  width: 36px;
  height: 36px;
  padding: 2px;
  border: 1px solid #444;
  border-top: 0;
  background: linear-gradient(#d9d9d9, #8e8e8e);
}

.top-rows {
  flex: 1;
  min-width: 0;
}

.titlebar {
  display: flex;
  height: 21px;
}

.title {
  flex: 1;
  text-align: center;
  line-height: 20px;
  color: #0e1c33;
  background: linear-gradient(90deg, #3d78bd, #2a5ea9 12%, #4a80c0 35%, #4d82c0 60%, #235fae 75%, #1d57a4);
}

.infocenter {
  display: flex;
  align-items: center;
  width: 405px;
  padding: 0 4px;
  background: #d3d3d3;
}

.infocenter button {
  display: flex;
  align-items: center;
  justify-content: center;
  width: 22px;
}

.search {
  width: 160px;
  height: 18px;
  margin: 0 0 0 5px;
  padding: 0 2px;
  border: 1px solid #333;
  background: #fff;
}

.search::placeholder {
  color: #555;
  font-style: italic;
}

.infocenter .signin {
  width: 44px;
}

.signin-tri {
  margin: 0 6px 0 auto;
}

.infocenter .help {
  width: 16px;
  height: 16px;
  margin: 0 8px 0 12px;
  border: 1px solid #444;
  border-radius: 8px;
  background: #fff;
  color: #24318a;
  font-weight: bold;
}

.window-buttons {
  display: flex;
  width: 106px;
  padding-left: 16px;
  background: linear-gradient(90deg, #1e426f, #5483b4 50%, #2e6097);
}

.window-buttons button {
  display: flex;
  align-items: center;
  justify-content: center;
  width: 24px;
  height: 16px;
  border: 1px solid #6f94bd;
  border-top: 0;
}

.window-buttons .win-close {
  width: 42px;
  border-left: 0;
}

.tabs {
  display: flex;
  gap: 1px;
  align-items: center;
  height: 16px;
  padding-left: 4px;
  background: #9c9c9c;
}

.tab {
  height: 16px;
  padding: 0 8px;
  line-height: 16px;
}

.tab.active {
  background: linear-gradient(#e6e6e6, #fafafa);
}

.ribbon-toggle {
  width: 14px;
  height: 8px;
  margin: 0 5px 0 18px;
  border: 1px solid #444;
  border-radius: 3px;
  background: #fff;
}

.ribbon-toggle span {
  display: block;
  width: 0;
  margin: 0 auto;
  border: 2px solid transparent;
  border-top: 0;
  border-bottom-color: #222;
}

.watermark {
  position: absolute;
  left: 0;
  top: 0;
  z-index: 2;
  pointer-events: none;
}

.blur {
  filter: blur(2px);
}

/* ribbon */
.ribbon {
  display: flex;
  flex: none;
  height: 81px;
  background: #fcfcfc;
  border-bottom: 2px solid #9a9a9a;
}

.panel {
  display: flex;
  flex-direction: column;
  flex: none;
  padding: 0 1px;
  border-right: 1px solid #d0d0d0;
}

.select-panel {
  padding: 0 4px 0 6px;
}

.model-panel {
  padding: 0 2px;
}

.last-panel {
  flex: 1;
}

.tools {
  display: flex;
  flex: 1;
  padding-top: 2px;
}

.column {
  display: flex;
  flex-direction: column;
}

.tool {
  position: relative;
  align-self: flex-start;
  text-align: center;
}

.tool svg {
  margin: 3px auto 3px;
}

.tool .tri {
  display: block;
  margin: 3px auto 0;
}

.tool .tri.side {
  position: absolute;
  right: 1px;
  top: 42px;
}

.tool:disabled, .small-tool:disabled {
  color: #b0b0b0;
}

.tool:disabled svg, .small-tool:disabled svg {
  opacity: .7;
}

.w34 { width: 34px; }
.w36 { width: 36px; }
.w40 { width: 40px; }
.w64 { width: 64px; }

.current {
  padding-bottom: 13px;
  border: 1px solid #5b9bd0;
  background: linear-gradient(#cfe4f7, #b4d3ef);
}

.panel-title {
  display: flex;
  align-items: center;
  justify-content: center;
  gap: 5px;
  height: 16px;
  margin: 0 -1px;
  background: #efefef;
}

.select-panel .panel-title {
  margin: 0 -4px 0 -6px;
}

.model-panel .panel-title {
  margin: 0 -2px;
}

.datum-panel {
  width: 54px;
}

.datum-panel .tools {
  padding: 12px 0 0 5px;
}

.work-column {
  padding-left: 2px;
}

.small-tool {
  display: flex;
  align-items: center;
  gap: 3px;
  height: 20px;
}

/* quick access toolbar */
.qat {
  display: flex;
  align-items: center;
  flex: none;
  height: 20px;
  padding-left: 3px;
  background: #d2d2d2;
  border-bottom: 1px solid #b4b4b4;
}

.qat button {
  display: flex;
  align-items: center;
  justify-content: center;
  width: 22px;
  height: 18px;
}

.qat > .tri {
  margin: 0 3px;
}

.qat .letter {
  font: bold 16px/18px "Liberation Sans", sans-serif;
}

.qat .on {
  border: 1px solid #4c94d0;
  background: #bcdaf3;
}

.qat .customize {
  width: 12px;
}

.customize .tri {
  position: relative;
}

.customize .tri::before {
  content: "";
  position: absolute;
  left: -3px;
  top: -6px;
  width: 6px;
  height: 1px;
  background: #333;
}

.sep {
  width: 1px;
  height: 14px;
  margin: 0 2px;
  background: #bbb;
}

/* workspace */
.workspace {
  display: flex;
  flex: 1;
  min-height: 0;
  padding-top: 20px;
}

.palette {
  display: flex;
  flex-direction: column;
  flex: none;
  width: 231px;
  margin-right: 6px;
  background: #f0f0f0;
}

.palette-head {
  display: flex;
  align-items: center;
  justify-content: space-between;
  flex: none;
  height: 17px;
  padding: 0 2px 0 3px;
  background: #bfcddd;
  border-bottom: 1px solid #74808e;
  color: #4a5868;
}

.palette-head button {
  width: 10px;
  color: #111;
  font: bold 11px/14px "DejaVu Sans", sans-serif;
}

.type-selector {
  display: flex;
  align-items: center;
  flex: none;
  height: 60px;
  padding: 2px;
  padding-right: 3px;
  background: linear-gradient(#fdfdfd, #ececee);
}

.type-thumb {
  display: flex;
  align-items: center;
  justify-content: center;
  width: 60px;
  height: 56px;
  border: 1px solid #e0e0e0;
}

.type-name {
  flex: 1;
  padding-left: 4px;
  text-align: left;
}

.instance-row {
  display: flex;
  align-items: center;
  justify-content: space-between;
  flex: none;
  height: 23px;
  padding-right: 6px;
}

.select-wrap {
  display: flex;
  position: relative;
}

.select-wrap select {
  appearance: none;
  width: 100%;
  padding: 0 3px;
}

.select-wrap::after {
  content: "";
  position: absolute;
  right: 4px;
  top: 50%;
  margin-top: -2px;
  border: 3px solid transparent;
  border-top: 4px solid #222;
  border-bottom: 0;
  pointer-events: none;
}

.instance-select {
  width: 157px;
  height: 21px;
  border: 1px solid #888;
  border-radius: 3px;
  background: linear-gradient(#fafafa, #e4e4e4);
}

.edit-type {
  display: flex;
  align-items: center;
  gap: 3px;
}

.props-body {
  display: flex;
  flex: 1;
  min-height: 0;
}

.props {
  flex: 1;
  table-layout: fixed;
  border-collapse: separate;
  border-spacing: 0;
  background: #fff;
}

.props tr {
  height: 17px;
}

.props tr:nth-child(4n) {
  height: 16px;
}

.props th, .props td {
  width: 50%;
  padding: 0;
  border-bottom: 1px dotted #aaa;
  font-weight: normal;
  text-align: left;
  line-height: 15px;
  white-space: nowrap;
}

.props th {
  padding-left: 10px;
}

.props td {
  padding-left: 2px;
  border-left: 1px dotted #aaa;
}

.props .group th {
  padding: 0 4px 0 3px;
  background: #dcdcdc;
  border-bottom-color: #dcdcdc;
}

.fold {
  float: right;
  margin-top: 3px;
}

.props .off {
  color: #8a8a8a;
}

.props input[type="text"] {
  display: block;
  width: 100%;
  height: 15px;
}

.props .boxed {
  padding-left: 4px;
  border: 1px solid #333;
}

.props td:has(.boxed), .props td:has(.edit) {
  padding-left: 0;
}

.props .edit {
  display: block;
  width: 100%;
  height: 14px;
  line-height: 12px;
  border: 1px solid #888;
  border-bottom: 2px solid #777;
  border-radius: 2px;
  background: linear-gradient(#f4f4f4, #cfcfcf);
}

.props input[type="checkbox"] {
  appearance: none;
  display: block;
  width: 12px;
  height: 12px;
  border: 1px solid #999;
  background: linear-gradient(135deg, #ddd, #fff);
}

.props input:disabled {
  border-color: #ccc;
}

.props input:checked {
  background: #eef2fb;
}

.props input:checked::before {
  content: "";
  display: block;
  width: 3px;
  height: 7px;
  margin: 0 0 0 4px;
  border: solid #3a3f9c;
  border-width: 0 2px 2px 0;
  transform: rotate(40deg);
}

.scroll {
  display: flex;
  flex-direction: column;
  align-items: center;
  flex: none;
  background: #ededef;
}

.props-scroll {
  width: 15px;
  padding: 6px 0 4px;
}

.thumb {
  display: flex;
  align-items: center;
  justify-content: center;
  width: 13px;
  height: 290px;
  margin: 5px 0 auto;
  border: 1px solid #aaa;
  border-radius: 2px;
  background: linear-gradient(90deg, #f4f4f4, #c8c8cc);
  color: #777;
}

.palette-foot {
  display: flex;
  align-items: center;
  justify-content: space-between;
  flex: none;
  height: 23px;
  padding: 0 1px 0 3px;
}

.palette-foot a {
  color: #1c6fd0;
}

.palette-foot button {
  width: 66px;
  height: 16px;
  border: 1px solid #c4c4c4;
  color: #888;
  background: #f4f4f4;
}

/* drawing view */
.view {
  display: flex;
  flex-direction: column;
  flex: 1;
  min-width: 0;
  margin-right: 6px;
  border: 2px solid #85858c;
  border-width: 2px 0 0 2px;
}

.view-main {
  display: flex;
  flex: 1;
  min-height: 0;
}

.canvas {
  position: relative;
  flex: 1;
  min-width: 0;
  background: #fff;
}

.scene {
  width: 100%;
  height: 100%;
}

.edges, .wire {
  fill: none;
  stroke: #1a1a1a;
  stroke-width: 1;
}

.cube text {
  fill: #b4b4b4;
}

.mdi-buttons {
  display: flex;
  gap: 4px;
  position: absolute;
  right: 3px;
  top: 5px;
}

.navbar {
  display: flex;
  flex-direction: column;
  align-items: center;
  gap: 5px;
  position: absolute;
  right: 2px;
  top: 149px;
  width: 30px;
  height: 98px;
  border: 1px solid #c8c8c8;
  border-radius: 4px;
  background: #f3f3f3;
}

.navbar > svg {
  align-self: flex-end;
}

.navbar hr {
  width: 100%;
  margin: 0;
  border: 0;
  border-top: 1px solid #d8d8d8;
}

.view-scroll {
  justify-content: space-between;
  width: 14px;
  padding: 5px 0 4px;
}

.square {
  width: 13px;
  height: 13px;
  border: 1px solid #999;
  background: linear-gradient(#fff, #d4d4d4);
}

.view-bar {
  display: flex;
  align-items: center;
  flex: none;
  height: 17px;
  padding-left: 17px;
  background: #f0f0f0;
}

.view-bar .scale {
  width: 52px;
  text-align: left;
}

.view-icons {
  display: flex;
  justify-content: space-between;
  width: 258px;
  margin-right: 8px;
}

.view-icons svg {
  width: 15px;
  height: 15px;
}

.hscroll {
  display: flex;
  align-items: center;
  justify-content: space-between;
  flex: 1;
  padding: 0 20px 0 227px;
}

/* project browser */
.browser {
  flex: none;
  width: 202px;
  background: #fff;
  border-left: 1px solid #999;
}

.tree {
  display: grid;
  grid-auto-rows: 17px 17px 17px 16px;
  margin: 0;
  padding: 0;
  list-style: none;
}

.tree li {
  display: flex;
  align-items: center;
  white-space: nowrap;
}

.tree span {
  padding: 0 2px;
  margin-left: 3px;
}

.tree .deep {
  margin-left: 5px;
}

.tree .picked {
  background: #e4e4e4;
}

.tree svg {
  margin-left: 1px;
}

.cell {
  display: flex;
  align-items: center;
  flex: none;
  width: 17px;
  height: 100%;
  padding-left: 4px;
  background: linear-gradient(#d0d0d0, #d0d0d0) 8px 0 / 1px 100% no-repeat;
}

.cell.first { background-position: 8px 8px; }
.cell.end { background-size: 1px 8px; }

.cell.dash::after {
  content: "";
  width: 9px;
  height: 1px;
  margin-left: 4px;
  background: #d0d0d0;
}

.box {
  width: 9px;
  height: 9px;
  border: 1px solid #aaa;
  background:
    linear-gradient(#333, #333) 1px 3px / 5px 1px no-repeat,
    linear-gradient(#333, #333) 3px 1px / 1px 5px no-repeat,
    #fff;
}

.box.minus {
  background: linear-gradient(#333, #333) 1px 3px / 5px 1px no-repeat #fff;
}

/* status bar */
.status {
  display: flex;
  align-items: center;
  flex: none;
  height: 20px;
  padding-left: 1px;
  border-top: 1px solid #b4b4b4;
  background: linear-gradient(#dcdcdc, #c4c4c4);
}

.hint {
  width: 492px;
  overflow: hidden;
  white-space: nowrap;
}

.status-icon {
  margin: 0 5px 0 3px;
}

.status .select-wrap {
  height: 18px;
  background: #fff;
  color: #777;
}

.status .select-wrap::after {
  border-top-color: #999;
}

.workset {
  width: 182px;
}

.option-select {
  width: 138px;
  margin-left: 4px;
}

.count {
  display: flex;
  align-items: center;
  gap: 4px;
  width: 42px;
  margin-left: 6px;
}

.design {
  margin-left: 6px;
}

.pick-tools {
  display: flex;
  gap: 7px;
  margin: 0 55px 0 auto;
}

.pick-tools .filter {
  display: flex;
  align-items: center;
}

.click-mark {
  display: flex;
  align-items: center;
  justify-content: center;
  position: absolute;
  right: 47px;
  top: 495px;
  width: 75px;
  height: 75px;
  padding: 14px 0 0 8px;
  border-radius: 50%;
  background: #f6e01e;
}
```
